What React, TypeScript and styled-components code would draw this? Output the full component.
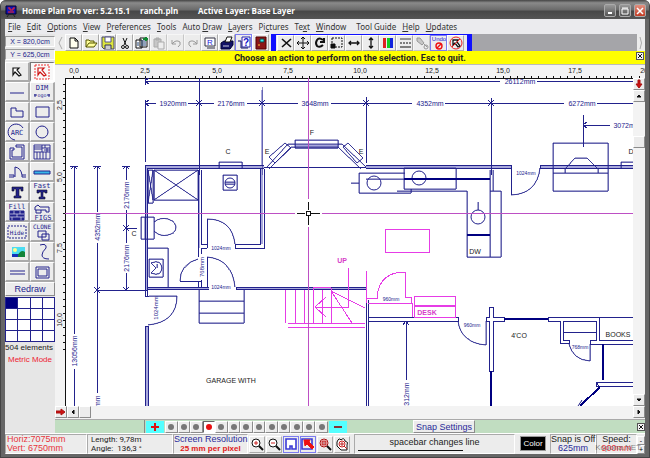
import React from "react";
import styled, { createGlobalStyle, css } from "styled-components";

const navy = "#22228c";
const pink = "#e63ce6";
const face = "#ececec";

const Global = createGlobalStyle`
  * { box-sizing: border-box; }
  body { margin: 0; background: #fff; font-family: "Liberation Sans", Arial, sans-serif; font-size: 9px; }
  button { font: inherit; padding: 0; margin: 0; }
  svg { display: block; }
`;

const raised = css`
  border: 1px solid;
  border-color: #fff #8c8c8c #8c8c8c #fff;
  background: ${face};
`;

const Window = styled.div`
  display: flex;
  flex-direction: column;
  position: relative;
  height: 100vh;
  min-height: 440px;
  padding: 0 4px 3px;
  background: #666;
  border: 1px solid #444;
  border-width: 0 1px 1px;
  border-radius: 6px 6px 0 0;
  overflow: hidden;
`;

const TitleBar = styled.header`
  display: flex;
  flex: none;
  align-items: center;
  height: 19px;
  margin: 0 -4px;
  padding: 2px 5px 0 4px;
  gap: 5px;
  background: linear-gradient(#444, #8a8a8a 15%, #6c6c6c 50%, #484848 60%, #555);
  color: #fff;
  font: 700 8px/12px "Open Sans", sans-serif;
`;
const TitleText = styled.span<{ $w: number }>`
  min-width: ${(p) => p.$w}px;
  white-space: nowrap;
`;
const Spacer = styled.div`
  flex: 1;
`;
const Caption = styled.button<{ $close?: boolean }>`
  display: grid;
  place-items: center;
  width: 12px;
  height: 13px;
  margin-right: -2px;
  border: 1px solid #aaa;
  border-radius: 2px;
  background: ${(p) =>
    p.$close ? "linear-gradient(#e09080, #c43c24)" : "linear-gradient(#999, #555)"};
`;

const MenuBar = styled.nav`
  display: flex;
  flex: none;
  height: 15px;
  align-items: center;
  background: #ebebee;
`;
const MenuItem = styled.button<{ $wide?: boolean }>`
  border: 0;
  padding: 0 ${(p) => (p.$wide ? 7 : 3)}px 0 3px;
  background: transparent;
  color: #333;
  font: 8px/13px "Noto Sans", sans-serif;
  white-space: nowrap;
`;

const Main = styled.div`
  display: flex;
  flex: 1;
  min-height: 0;
  background: #f3f3f3;
`;
const Sidebar = styled.aside`
  display: flex;
  flex-direction: column;
  flex: none;
  width: 50px;
  padding-top: 2px;
  background: #e6e6e6;
`;
const Coord = styled.output`
  height: 11px;
  margin-bottom: 2px;
  border: 1px solid #aaa;
  border-color: #999 #fff #fff #999;
  color: ${navy};
  background: #ececec;
  font: 7px/9px "Liberation Sans", sans-serif;
  text-align: center;
`;
const Tools = styled.div`
  display: grid;
  grid-template-columns: 1fr 1fr;
  grid-auto-rows: 20px;
`;
const Tool = styled.button<{ $on?: boolean }>`
  ${raised}
  display: grid;
  place-items: center;
  border-width: 1px 2px 2px 1px;
  border-color: #fff #aaa #aaa #fff;
  ${(p) => p.$on && "background: #f8f8f8; border-color: #777 #fff #fff #777;"}
`;
const Redraw = styled.button`
  ${raised}
  height: 14px;
  color: ${navy};
  font-size: 9px;
`;
const Layers = styled.div`
  display: grid;
  grid-template: repeat(4, 10px) / repeat(4, 1fr);
  gap: 1px;
  margin-top: 1px;
  padding: 1px;
  background: ${navy};
`;
const Cell = styled.i<{ $on?: boolean }>`
  background: ${(p) => (p.$on ? "#000080" : "#fff")};
`;
const Note = styled.div<{ $red?: boolean }>`
  line-height: 12px;
  text-align: ${(p) => (p.$red ? "center" : "left")};
  color: ${(p) => (p.$red ? "#ee2233" : "#222")};
  font-size: 8px;
  white-space: nowrap;
`;

const Work = styled.main`
  display: flex;
  flex-direction: column;
  flex: 1;
  min-width: 0;
`;
const Toolbar = styled.div`
  display: flex;
  flex: none;
  height: 17px;
  background: #a5a5a9;
`;
const Chevron = styled.div<{ $w: number }>`
  display: grid;
  place-items: center;
  width: ${(p) => p.$w}px;
  background: #ececec;
  color: #aaa;
`;
const Group = styled.div<{ $blue?: boolean }>`
  display: flex;
  padding-right: 2px;
  background: ${face};
  ${(p) => p.$blue && "border: solid #1111ff; border-width: 1px 5px 0; padding: 0 3px 0 1px;"}
`;
const IconButton = styled.button<{ $dim?: boolean; $hot?: boolean }>`
  ${raised}
  display: grid;
  place-items: center;
  width: 17px;
  height: 100%;
  border-color: #fff #aaa #aaa #fff;
  opacity: ${(p) => (p.$dim ? 0.55 : 1)};
  ${(p) => p.$hot && "border-color: #7c7cf0;"}
`;
const Message = styled.div`
  display: flex;
  flex: none;
  align-items: center;
  justify-content: center;
  position: relative;
  height: 14px;
  background: #ffff00;
  border-bottom: 1px solid #bbb;
  color: #222;
  font: bold 9px/12px Roboto, sans-serif;
`;
const CloseBox = styled.button`
  display: grid;
  place-items: center;
  width: 8px;
  height: 8px;
  border: 1px solid #555;
  background: #f4f4f4;
`;
const MessageClose = styled(CloseBox)`
  position: absolute;
  right: 1px;
  top: 1px;
`;
const View = styled.div`
  display: grid;
  flex: 1;
  min-height: 0;
  grid-template: 13px minmax(0, 1fr) 12px / 10px minmax(0, 1fr) 12px;
  background: #f3f3f3;
`;
const TopRuler = styled.svg`
  grid-column: 1 / 4;
  width: 100%;
  height: 13px;
`;
const SideRuler = styled.svg`
  width: 10px;
  height: 100%;
`;
const Plan = styled.svg`
  width: 100%;
  height: 100%;
  background: #fff;
`;
const VScroll = styled.div`
  display: flex;
  flex-direction: column;
`;
const HScroll = styled.div`
  display: flex;
  grid-column: 1 / 4;
`;
const ScrollButton = styled.button`
  ${raised}
  display: grid;
  place-items: center;
  flex: none;
  width: 12px;
  height: 12px;
`;
const Gap = styled.div<{ $h?: number }>`
  flex: ${(p) => (p.$h ? "none" : 1)};
  height: ${(p) => (p.$h ? p.$h + "px" : "auto")};
`;
const LayerBar = styled.div`
  display: flex;
  flex: none;
  height: 14px;
  margin-top: 1px;
  align-items: center;
  background: #c1ddc1;
  border-top: 1px solid #aaa;
`;
const LayerLead = styled.div`
  width: 90px;
  height: 100%;
  border-right: 1px solid #888;
`;
const Step = styled.button`
  display: grid;
  place-items: center;
  width: 18px;
  height: 12px;
  margin: 0 1px;
  border: 0;
  background: #5ff;
`;
const Dots = styled.div`
  display: grid;
  grid-template-columns: repeat(13, 1fr);
  width: 163px;
`;
const Dot = styled.button<{ $on?: boolean }>`
  ${raised}
  display: grid;
  place-items: center;
  height: 12px;
  ${(p) => p.$on && "background: #fff; border-color: #666 #fff #fff #666;"}
  &::after {
    content: "";
    width: 6px;
    height: 6px;
    border-radius: 3px;
    background: ${(p) => (p.$on ? "#e81010" : "#777")};
  }
`;
const SnapButton = styled.button`
  ${raised}
  width: 62px;
  height: 13px;
  margin-left: 65px;
  color: #2a2a9a;
  white-space: nowrap;
`;

const Status = styled.footer`
  display: flex;
  flex: none;
  height: 21px;
  background: ${face};
  border-top: 1px solid #fff;
`;
const Pane = styled.div<{ $w?: number; $pad?: number; $center?: boolean; $small?: boolean }>`
  display: flex;
  flex-direction: column;
  justify-content: center;
  flex: ${(p) => (p.$w ? "none" : "1")};
  width: ${(p) => (p.$w ? p.$w + "px" : "auto")};
  padding-left: ${(p) => p.$pad || 0}px;
  border: 1px solid;
  border-color: #aaa #fff #fff #aaa;
  color: #222;
  text-align: ${(p) => (p.$center ? "center" : "left")};
  font: ${(p) => (p.$small ? "8px/9px Roboto" : '9px/9px "Liberation Sans"')}, sans-serif;
  white-space: nowrap;
`;
const Ink = styled.span<{ $c: string; $bold?: boolean; $size?: number }>`
  color: ${(p) => p.$c};
  font-weight: ${(p) => (p.$bold ? "bold" : "normal")};
  font-size: ${(p) => p.$size || 9}px;
`;
const ZoomGroup = styled.div`
  display: flex;
  align-items: center;
  gap: 1px;
  padding: 0 4px 0 1px;
`;
const ZoomButton = styled(IconButton)`
  width: 16px;
  height: 17px;
`;
const LineSample = styled.div`
  width: 105px;
  height: 1px;
  margin: 3px 0 0 3px;
  background: #111;
`;
const ColorButton = styled.button`
  width: 26px;
  height: 15px;
  margin: 2px 4px 0 5px;
  border: 1px solid #999;
  background: #000;
  color: #fff;
  font-size: 8px;
`;
const SpeedPane = styled.div`
  display: flex;
  flex: none;
  width: 49px;
`;
const Spin = styled.button`
  ${raised}
  flex: 1;
  width: 8px;
  font-size: 7px;
  line-height: 6px;
`;
const SpinCol = styled.div`
  display: flex;
  flex-direction: column;
  padding-top: 2px;
`;
const Watermark = styled.div`
  position: absolute;
  right: 8px;
  bottom: 5px;
  color: rgba(70, 70, 70, 0.65);
  font: 8px/9px "Liberation Sans", sans-serif;
`;

type Art = { name: string; art: React.ReactNode; dim?: boolean; hot?: boolean };

const Svg = ({ w = 14, h = 14, children }: { w?: number; h?: number; children: React.ReactNode }) => (
  <svg width={w} height={h} viewBox={`0 0 ${w} ${h}`} fill="none" stroke="#111" aria-hidden="true">
    {children}
  </svg>
);

const fileIcons: Art[] = [
  { name: "New", art: <path d="M3 2H8L11 5V12H3ZM8 2V5H11" fill="#ffe" /> },
  {
    name: "Open",
    art: <path d="M2 11V4H5L6 5H10V7M2 11L5 7H13L10 11Z" fill="#ff9" stroke="#550" />,
  },
  {
    name: "Save",
    art: (
      <>
        <path d="M1 1H13V13H3L1 11Z" fill="#dde63c" stroke="#446" />
        <path d="M4 1H10V6H4Z" fill="#fff" stroke="#558" />
        <path d="M4 13V9H10V13" fill="#ccc" stroke="#335" />
      </>
    ),
  },
  {
    name: "Cut",
    art: (
      <>
        <path d="M5 2L8 9M9 2L6 9" />
        <circle cx="5" cy="11" r="1.5" />
        <circle cx="9" cy="11" r="1.5" />
      </>
    ),
  },
  {
    name: "Copy",
    art: (
      <>
        <path d="M1 4H7V12H1ZM5 2H12V11H5Z" fill="#fff" />
        <path d="M6 5H11M6 7H11M6 9H11M2 7H4M2 9H4" stroke="#247" />
        <path d="M8 3H13M11 1V5" stroke="#183" strokeWidth="2" />
      </>
    ),
  },
  {
    name: "Paste",
    dim: true,
    art: (
      <>
        <path d="M2 3H9V11H2ZM4 2H7V4H4Z" fill="#aaa" stroke="#777" />
        <path d="M6 6H12V13H6Z" fill="#eee" stroke="#777" />
      </>
    ),
  },
  { name: "Undo", dim: true, art: <path d="M3 4V8H7M3 8Q7 3 11 6Q12 9 9 11" stroke="#555" /> },
  { name: "Redo", dim: true, art: <path d="M11 4V8H7M11 8Q7 3 3 6Q2 9 5 11" stroke="#555" /> },
  {
    name: "Resolution",
    art: (
      <>
        <path d="M2 2H12V10H2ZM4 12H12" fill="#fff" stroke="#334" />
        <text x="4" y="9" fontSize="8" fill="#22d" stroke="none">R</text>
      </>
    ),
  },
  {
    name: "Print",
    art: (
      <>
        <path d="M1 7L4 5H13V9L10 13H1Z" fill="#116" stroke="#003" />
        <path d="M5 6L7 1H12L10 6Z" fill="#fff" />
        <path d="M3 10H9" stroke="#ccd" />
      </>
    ),
  },
  {
    name: "Help",
    hot: true,
    art: (
      <>
        <path d="M5 1H13V11H5Z" fill="#fff" stroke="#22a" />
        <path d="M1 5H4V12H11" stroke="#116" />
        <text x="6" y="10" fontSize="10" fontWeight="bold" fill="#11c" stroke="none">?</text>
      </>
    ),
  },
  {
    name: "Exit",
    art: (
      <>
        <path d="M2 1H12V13H2Z" fill="#8c1717" stroke="#500" />
        <path d="M6 3H10V6H6Z" fill="#3ee" stroke="#144" />
        <path d="M4 9H6" stroke="#fc4" />
      </>
    ),
  },
];

const editIcons: Art[] = [
  { name: "Delete", art: <path d="M3 3L12 11M12 3L3 11" strokeWidth="1.6" /> },
  {
    name: "Move",
    art: <path d="M7 1V13M1 7H13M5 3L7 1L9 3M5 11L7 13L9 11M3 5L1 7L3 9M11 5L13 7L11 9" />,
  },
  { name: "Rotate", art: <path d="M10 4Q6 1 4 4Q2 7 4 10Q7 12 10 9M11 2V6H7" strokeWidth="2" /> },
  {
    name: "Scale",
    art: (
      <>
        <path d="M2 2H12V11H2Z" strokeDasharray="2 1" />
        <path d="M1 8H5V12H1Z" fill="#111" />
      </>
    ),
  },
  { name: "Flip horizontally", art: <path d="M2 7H12M4 5L2 7L4 9M10 5L12 7L10 9" strokeWidth="1.3" /> },
  { name: "Flip vertically", art: <path d="M7 2V12M5 4L7 2L9 4M5 10L7 12L9 10" strokeWidth="1.3" /> },
  {
    name: "Colour",
    art: (
      <g stroke="none">
        <path d="M2 2H5V12H2Z" fill="#d22" />
        <path d="M6 2H9V12H6Z" fill="#1c2" />
        <path d="M9 2H12V12H9Z" fill="#12d" />
      </g>
    ),
  },
  {
    name: "Line style",
    art: (
      <>
        <path d="M2 3H13" strokeWidth="0.8" />
        <path d="M2 7H13" strokeDasharray="2 1" />
        <path d="M2 11H13" />
      </>
    ),
  },
  {
    name: "Pipette",
    dim: true,
    art: (
      <>
        <path d="M2 2H5L9 7L7 9L2 5ZM9 8L12 11" fill="#aaa" stroke="#555" />
        <circle cx="11" cy="11" r="2" stroke="#555" />
      </>
    ),
  },
  {
    name: "Undo action",
    hot: true,
    art: (
      <>
        <text x="7" y="5" fontSize="6" textAnchor="middle" fill="#22c" stroke="none">Undo</text>
        <circle cx="7" cy="10" r="3" stroke="#e11" strokeWidth="1.4" />
        <path d="M9 8L5 12" stroke="#e11" strokeWidth="1.4" />
      </>
    ),
  },
  {
    name: "Cancel selection",
    art: (
      <>
        <path d="M4 4H9L8 6L11 10L9 11L6 7L4 9Z" fill="#fff" strokeWidth="1.3" />
        <circle cx="7" cy="7" r="6" stroke="#e22" />
        <path d="M11 3L3 11" stroke="#e22" />
      </>
    ),
  },
];

const Word = ({ x, y, s, children }: { x: number; y: number; s: number; children: string }) => (
  <text
    x={x}
    y={y}
    fontSize={s}
    fill={navy}
    stroke="none"
    textAnchor="middle"
    fontFamily='"DejaVu Sans Mono", monospace'
  >
    {children}
  </text>
);

const bigT = "M5 4H16V8H14V6H12V13H14V15H7V13H9V6H7V8H5Z";

const tools: Art[] = [
  { name: "Select", art: <path d="M6 5H12L10 7L14 12L12 13L8 9L6 12Z" fill="#fff" strokeWidth="1.2" /> },
  {
    name: "Select area",
    art: (
      <>
        <path d="M3 2H17V16H3Z" stroke="#e33" strokeDasharray="2 1" />
        <path d="M6 5H12L10 7L14 12L12 13L8 9L6 12Z" fill="#fff" stroke="#c11" strokeWidth="1.2" />
      </>
    ),
  },
  { name: "Line", art: <path d="M3 10H17" stroke={navy} /> },
  {
    name: "Dimension",
    art: (
      <>
        <Word x={10} y={7} s={7}>DIM</Word>
        <path d="M2 12H5M15 12H18M3 11V14M17 11V14" stroke={navy} />
        <Word x={10} y={14} s={5}>ogo</Word>
      </>
    ),
  },
  { name: "Polygon", art: <path d="M4 5H9V8H16V14H4Z" stroke={navy} /> },
  { name: "Rectangle", art: <path d="M4 4H17V14H4Z" stroke={navy} /> },
  {
    name: "Arc",
    art: (
      <>
        <path d="M16 5A8 8 0 1 0 8 17" stroke={navy} />
        <Word x={10} y={12} s={7}>ARC</Word>
      </>
    ),
  },
  { name: "Circle", art: <circle cx="10" cy="9" r="6" stroke={navy} /> },
  { name: "Walls", art: <path d="M3 5H7V7H5V14H15V4H9V2H17V16H3Z" stroke={navy} /> },
  {
    name: "Fill patterns",
    art: (
      <path
        d="M2 2H18V16H2ZM2 9H18M10 2V9M2 4H10M2 6H10M10 5H18M13 2V5M15 5V9M5 9V16M8 9V16M11 9V16M14 9V16M12 7H18"
        stroke={navy}
        strokeWidth="0.9"
      />
    ),
  },
  { name: "Door", art: <path d="M2 12H7V14H2M8 14V4Q14 5 15 12V14H19M15 12H19" stroke={navy} /> },
  { name: "Window", art: <path d="M2 8H18V11H2Z" fill="#37b7e8" stroke={navy} /> },
  { name: "Text", art: <path d={bigT} fill={navy} stroke="#112" strokeWidth="0.6" /> },
  {
    name: "Fast text",
    art: (
      <>
        <Word x={10} y={5} s={7}>Fast</Word>
        <path d="M5 7H15V10H13V9H11V14H13V16H7V14H9V9H7V10H5Z" fill={navy} stroke="#112" strokeWidth="0.6" />
      </>
    ),
  },
  {
    name: "Fill",
    art: (
      <>
        <Word x={10} y={6} s={7}>Fill</Word>
        <path d="M3 8H17V17H3Z" fill={navy} stroke={navy} />
        <path d="M3 11H17M3 14H17M7 8V11M13 8V11M10 11V14M5 14V17M14 14V17" stroke="#dde" strokeWidth="0.7" />
      </>
    ),
  },
  {
    name: "Figures",
    art: (
      <>
        <path d="M3 4L6 2L8 4H17V9H14V7H9V10H4V7H3ZM4 7H9" stroke={navy} />
        <Word x={11} y={17} s={7}>FIGS</Word>
      </>
    ),
  },
  {
    name: "Hide",
    art: (
      <>
        <path d="M1 3H19V15H1Z" stroke={navy} strokeDasharray="2 1" />
        <Word x={10} y={12} s={6}>Hide</Word>
      </>
    ),
  },
  {
    name: "Clone",
    art: (
      <>
        <Word x={10} y={6} s={6}>CLONE</Word>
        <path d="M6 8H14V14H6ZM10 11H17V17H10Z" stroke={navy} />
      </>
    ),
  },
  {
    name: "Picture",
    art: (
      <g stroke="none">
        <path d="M5 4H18V14H5Z" fill="#4bdcf2" />
        <path d="M5 11H18V14H5Z" fill="#1630b8" />
        <path d="M11 12Q14 6 18 9V14H11Z" fill="#12843a" />
        <circle cx="8" cy="7" r="2" fill="#ffff8c" />
      </g>
    ),
  },
  { name: "Curve", art: <path d="M8 2Q15 0 14 5Q10 9 10 12Q10 16 17 16" stroke={navy} /> },
  { name: "Double line", art: <path d="M3 8H18M3 11H18" stroke={navy} /> },
  { name: "Double box", art: <path d="M4 4H17V15H4ZM6 6H15V13H6Z" stroke={navy} /> },
];

const Lens = ({ c = "#111" }: { c?: string }) => (
  <>
    <circle cx="6" cy="6" r="4" stroke={c} fill="#fff" />
    <path d="M9 9L13 13" strokeWidth="2" />
  </>
);
const zooms: Art[] = [
  { name: "Zoom in", art: <><Lens /><path d="M4 6H8M6 4V8" stroke="#c22" /></> },
  { name: "Zoom out", art: <><Lens /><path d="M4 6H8" stroke="#c22" /></> },
  {
    name: "Zoom page",
    hot: true,
    art: <path d="M2 2H12V12H8V9H6V12H2Z" fill="#fff" stroke="#3b3bd6" strokeWidth="1.6" />,
  },
  {
    name: "Zoom selection",
    hot: true,
    art: (
      <>
        <path d="M1 2H11V12H1Z" stroke="#3b3bd6" strokeWidth="1.6" />
        <path d="M3 3H9L8 5L13 10L11 12L6 7L4 9Z" fill="#e11" stroke="#e11" />
      </>
    ),
  },
  { name: "Zoom window", art: <><Lens c="#a11" /><path d="M4 4H8V8H4Z" stroke="#c22" fill="#c88" /></> },
  {
    name: "Zoom drag",
    art: (
      <>
        <path d="M2 5Q4 0 6 3Q9 0 10 4Q14 5 12 8V13H6L2 9Z" fill="#fff" />
        <circle cx="7" cy="7" r="3" stroke="#c22" />
        <path d="M5 7H9M7 5V9M9 9L12 12" stroke="#b22" />
      </>
    ),
  },
];

const menus: [string, string, string][] = [
  ["", "F", "ile"],
  ["", "E", "dit"],
  ["", "O", "ptions"],
  ["", "V", "iew"],
  ["", "P", "references"],
  ["", "T", "ools"],
  ["Auto ", "D", "raw"],
  ["", "L", "ayers"],
  ["Pi", "c", "tures"],
  ["Te", "x", "t"],
  ["", "W", "indow"],
  ["Tool Guide", "", ""],
  ["", "H", "elp"],
  ["", "U", "pdates"],
];

const topLabels: [number, string][] = [
  [74, "0,0"], [145, "2,5"], [217, "5,0"], [288, "7,5"], [360, "10,0"],
  [432, "12,5"], [503, "15,0"], [575, "17,5"], [647, "20,0"],
];
const sideLabels: [number, string][] = [[105, "2,5"], [177, "5,0"], [248, "7,5"], [320, "10,0"]];
const ticks = (from: number, count: number) =>
  Array.from({ length: count }, (_, i) => Math.round(from + i * 7.16));

const Label = ({
  x, y, s = 7, c = navy, turn, bold, children,
}: {
  x: number; y: number; s?: number; c?: string; turn?: boolean; bold?: boolean; children: string;
}) => (
  <text
    x={x}
    y={y}
    fontSize={s}
    fill={c}
    stroke="none"
    fontWeight={bold ? "bold" : "normal"}
    textAnchor="middle"
    dominantBaseline="central"
    transform={turn ? `rotate(-90 ${x} ${y})` : undefined}
  >
    {children}
  </text>
);

const Star = ({ x, y }: { x: number; y: number }) => (
  <path d={`M${x - 3} ${y - 3}L${x + 3} ${y + 3}M${x + 3} ${y - 3}L${x - 3} ${y + 3}`} />
);

const dimLines = [
  "M145 81H500M537 81H634M145 77V85M149 78L145 81L149 84",
  "M145 103H156M188 103H214M247 103H298M331 103H412M445 103H564M597 103H640",
  "M149 100L145 103L149 106M145 100V162M199 78V175M366 97V163M491 98V175",
  "M583 115V147M583 125H610M587 122L583 125L587 128",
  "M74 166V334M74 369V410M97 166V212M97 243V393M126 166V180M126 210V243M126 273V290",
  "M70 166H78M93 166H101M122 166H130M71 169L74 166L77 169M94 169L97 166L100 169M123 169L126 166L129 169",
  "M97 290H148M126 228H137M123 287L126 290L129 287M406 321V380M403 325L406 321L409 325M402 321H410",
];

const walls = [
  "M145 288V165H264M147 168H264M147 168V296M145 288V296M145 296H149",
  "M264 167H366M366 165H511M366 168H511M511 165V195M540 165H634M540 168H634M540 165V168",
  "M145 406V326H148V406",
  "M147 287H209M147 289H209M236 287H366M236 289H366M236 287V289",
  "M198 170V257M201 170V244M201 244H207M201 248H207M201 248V254M201 280V288M207 219V248",
  "M235 244H260V169M235 248H264V169M235 244V248M207 257V288M198 281V287M180 281H201",
  "M366 300V406M368 300V406M368 317H458V321H368M368 303V317",
  "M489 307H493V317H504V321H493V371H489V321H486V317H489Z",
  "M634 317H548V321H560V343H569V340H563V321H596V340H590V344H634M599 317V340H634M563 332H596",
  "M634 382H596V386H634M596 382L600 388",
];

const fixtures = [
  "M219 169V162H242V169M621 169V162H634",
  "M267 167L288 144H342L366 167M269 169L291 147H338L361 169",
  "M269 157L285 143L291 148L275 163ZM348 143L343 147L357 163L363 158ZM295 140H338V148H295Z",
  "M148 170H153V203H148ZM148 170L153 200M153 170L148 203M154 170H198V200H154ZM154 170L198 200M198 170L154 200",
  "M141 217H154V239H141ZM145 217V239M154 222Q160 217 168 219Q176 222 176 227Q176 233 168 235Q160 237 154 231",
  "M148 248H168V287M149 259H163V277H149ZM151 263Q161 259 162 268Q161 277 151 273M151 263L156 268L151 273M157 264V268",
  "M223 175H237V190H223ZM225 182H235M225 184H235",
  "M207 219Q232 219 235 244M207 257Q232 259 235 287M180 281Q180 264 198 259",
  "M149 296H177Q177 322 148 325",
  "M199 290V323M244 290V323M199 301H244M199 313H244M199 323H244",
  "M405 173H359V193H411V189M351 183H359M404 168H456V189H404ZM366 179H404",
  "M397 191H467V257H501V191H490M490 170V257M493 170V191M478 202V210",
  "M511 195Q537 194 540 168M553 143H608V191H553ZM553 173H608M565 173V169L575 158H587L598 169V173",
  "M458 321Q461 343 486 345V321M569 344Q573 360 590 361V344M578 406L582 400",
];

const magenta = [
  "M385 229H429V252H385Z",
  "M348 268V307H315M326 297L315 307L326 317",
  "M285 290V323M295 290V323M304 290V323M313 288V323M322 290V323M331 288V323M313 287H331",
  "M331 291L365 308M331 291L352 323M288 323H365M288 327H365",
  "M366 271V298H377V296Q380 272 405 272V297H411M368 303H412V317M411 297V303M366 298V303",
  "M414 296H455V317H414ZM414 306H455",
];

const FloorPlan = () => (
  <Plan role="img" aria-label="Floor plan">
    <g transform="translate(-65 -78)" fill="none" shapeRendering="crispEdges">
      <path d="M65 78V2000M65 78H2000" stroke="#111" strokeWidth="2" />
      <g stroke="#a9a9dc" strokeWidth="2">
        <path d="M145 167H264M366 167H511M540 167H634M147 168V290M147 327V406M199 170V248M262 90V244M147 288H209M236 288H366M295 146H338" />
      </g>
      <g stroke={navy}>
        <path d={dimLines.join("")} />
        <path d={walls.join("")} />
        <path d={fixtures.join("")} shapeRendering="auto" strokeWidth="0.8" />
        <path d={fixtures.join("")} strokeWidth="0.5" />
        <path d="M262 87V175" strokeWidth="0.5" />
        <circle cx="230" cy="183" r="5" shapeRendering="auto" />
        <circle cx="374" cy="183" r="7" shapeRendering="auto" />
        <circle cx="419" cy="178" r="7" shapeRendering="auto" />
        <circle cx="478" cy="217" r="7" shapeRendering="auto" />
        {[199, 262, 366, 491].map((x) => <Star key={x} x={x} y={103} />)}
        <Star x={97} y={290} />
        <Star x={126} y={228} />
        <path
          d="M404 179H490M467 235H490M504 319H548M491 371V406M603 344V380M600 387L580 406"
          stroke="#000080"
          strokeWidth="2"
        />
      </g>
      <g stroke={pink}>
        <path d={magenta.join("")} />
        <path d="M414 306H455" strokeWidth="2" />
        <path d="M308 78V199M308 227V1000M65 213H295M322 213H2000" stroke="#bd4fc4" />
      </g>
      <path d="M297 213H305M311 213H320M308 202V210M308 216V225M306 211H310V215H306Z" stroke="#111" />

      <Label x={520} y={81}>26112mm</Label>
      <Label x={173} y={103}>1920mm</Label>
      <Label x={231} y={103}>2176mm</Label>
      <Label x={315} y={103}>3648mm</Label>
      <Label x={430} y={103}>4352mm</Label>
      <Label x={582} y={103}>6272mm</Label>
      <Label x={627} y={125}>3072mm</Label>
      <Label x={74} y={351} turn>13056mm</Label>
      <Label x={97} y={227} turn>4352mm</Label>
      <Label x={97} y={409} turn>4352mm</Label>
      <Label x={126} y={195} turn>2176mm</Label>
      <Label x={126} y={258} turn>2176mm</Label>
      <Label x={406} y={394} turn>312mm</Label>
      <Label x={156} y={308} s={6} turn>1024mm</Label>
      <Label x={202} y={267} s={6} turn>768mm</Label>
      <Label x={221} y={248} s={5}>1024mm</Label>
      <Label x={221} y={287} s={5}>1024mm</Label>
      <Label x={526} y={173} s={5}>1024mm</Label>
      <Label x={391} y={299} s={5}>960mm</Label>
      <Label x={472} y={325} s={5}>960mm</Label>
      <Label x={580} y={347} s={5}>768mm</Label>
      <Label x={228} y={151} c="#222">C</Label>
      <Label x={134} y={233} c="#222">C</Label>
      <Label x={267} y={151} c="#222">E</Label>
      <Label x={361} y={151} c="#222">E</Label>
      <Label x={312} y={132} c="#222">F</Label>
      <Label x={631} y={151} c="#222">D</Label>
      <Label x={475} y={251} c="#222">DW</Label>
      <Label x={519} y={335} c="#222">4'CO</Label>
      <Label x={618} y={334} c="#222">BOOKS</Label>
      <Label x={231} y={380} c="#222">GARAGE WITH</Label>
      <Label x={342} y={260} c="#d63cc8" bold>UP</Label>
      <Label x={427} y={312} c="#d63cc8" bold>DESK</Label>
    </g>
  </Plan>
);

const Buttons = ({ items }: { items: Art[] }) => (
  <>
    {items.map((i) => (
      <IconButton key={i.name} aria-label={i.name} $dim={i.dim} $hot={i.hot}>
        <Svg>{i.art}</Svg>
      </IconButton>
    ))}
  </>
);

const Cross = () => (
  <Svg w={6} h={6}><path d="M1 1L5 5M5 1L1 5" /></Svg>
);

export default function App() {
  return (
    <>
      <Global />
      <Window>
        <TitleBar>
          <Svg w={12} h={12}>
            <path d="M1 1H11V9H1Z" fill="#1414b4" stroke="#003" />
            <path d="M3 3H5V5H8V3H10M3 7H9" stroke="#f22" />
            <path d="M2 12L4 9H8L10 12" stroke="#222" />
          </Svg>
          <TitleText $w={113}>Home Plan Pro ver: 5.2.15.1</TitleText>
          <TitleText $w={53}>ranch.pln</TitleText>
          <TitleText $w={100}>Active Layer: Base Layer</TitleText>
          <Spacer />
          <Caption aria-label="Minimize"><Svg w={8} h={8}><path d="M2 6H6" stroke="#fff" strokeWidth="2" /></Svg></Caption>
          <Caption aria-label="Maximize"><Svg w={8} h={8}><path d="M1 2H7V7H1ZM1 1H7" stroke="#fff" /></Svg></Caption>
          <Caption aria-label="Close" $close><Svg w={8} h={8}><path d="M1 1L7 7M7 1L1 7" stroke="#fff" strokeWidth="1.5" /></Svg></Caption>
        </TitleBar>
        <MenuBar>
          {menus.map(([a, u, b]) => (
            <MenuItem key={a + u + b} $wide={u === "W"}>{a}<u>{u}</u>{b}</MenuItem>
          ))}
        </MenuBar>
        <Main>
          <Sidebar>
            <Coord>X = 820,0cm</Coord>
            <Coord>Y = 625,0cm</Coord>
            <Tools>
              {tools.map((t) => (
                <Tool key={t.name} aria-label={t.name} $on={t.name === "Select area"}>
                  <Svg w={20} h={18}>{t.art}</Svg>
                </Tool>
              ))}
            </Tools>
            <Redraw>Redraw</Redraw>
            <Layers>
              {Array.from({ length: 16 }, (_, i) => <Cell key={i} $on={i === 0} />)}
            </Layers>
            <Note>504 elements</Note>
            <Note $red>Metric Mode</Note>
          </Sidebar>
          <Work>
            <Toolbar>
              <Chevron $w={10}><Svg w={6} h={14}><path d="M5 1L2 7L5 13" stroke="#aaa" /></Svg></Chevron>
              <Group><Buttons items={fileIcons} /></Group>
              <Group $blue><Buttons items={editIcons} /></Group>
              <Spacer />
              <Chevron $w={8}><Svg w={6} h={14}><path d="M2 1Q5 7 2 13" stroke="#aaa" /></Svg></Chevron>
            </Toolbar>
            <Message>
              Choose an action to perform on the selection. Esc to quit.
              <MessageClose aria-label="Close message"><Cross /></MessageClose>
            </Message>
            <View>
              <TopRuler>
                <g transform="translate(-55 -65)" shapeRendering="crispEdges">
                  <path d={ticks(73, 81).map((x) => `M${x} 76V78`).join("")} stroke="#111" />
                  {topLabels.map(([x, t]) => <Label key={t} x={x} y={70} s={7} c="#222">{t}</Label>)}
                </g>
              </TopRuler>
              <SideRuler>
                <g transform="translate(-55 -78)" shapeRendering="crispEdges">
                  <path d={ticks(84, 38).map((y) => `M63 ${y}H65`).join("")} stroke="#111" />
                  {sideLabels.map(([y, t]) => <Label key={t} x={59} y={y} s={7} c="#222" turn>{t}</Label>)}
                </g>
              </SideRuler>
              <FloorPlan />
              <VScroll>
                <ScrollButton aria-label="Jump down"><Svg w={10} h={10}><path d="M4 1H6V5H8L5 9L2 5H4Z" fill="#c11" stroke="#a11" /></Svg></ScrollButton>
                <ScrollButton aria-label="Scroll up"><Svg w={8} h={8}><path d="M2 5L4 3L6 5Z" fill="#111" /></Svg></ScrollButton>
                <Gap $h={34} />
                <ScrollButton aria-label="Vertical position" />
                <Gap />
                <ScrollButton aria-label="Scroll down"><Svg w={8} h={8}><path d="M2 3L4 5L6 3Z" fill="#111" /></Svg></ScrollButton>
              </VScroll>
              <HScroll>
                <ScrollButton aria-label="Jump right"><Svg w={10} h={10}><path d="M0 4H5V2L9 5L5 8V6H0Z" fill="#c11" stroke="#a11" /></Svg></ScrollButton>
                <ScrollButton aria-label="Scroll left"><Svg w={8} h={8}><path d="M5 2L3 4L5 6Z" fill="#111" /></Svg></ScrollButton>
                <ScrollButton aria-label="Horizontal position" />
                <Gap />
                <ScrollButton aria-label="Scroll right"><Svg w={8} h={8}><path d="M3 2L5 4L3 6Z" fill="#111" /></Svg></ScrollButton>
              </HScroll>
            </View>
            <LayerBar>
              <LayerLead />
              <Step aria-label="Add layer"><Svg w={8} h={8}><path d="M0 4H8M4 0V8" stroke="#d11" strokeWidth="2" /></Svg></Step>
              <Dots>
                {Array.from({ length: 13 }, (_, i) => <Dot key={i} aria-label={`Layer ${i + 1}`} $on={i === 3} />)}
              </Dots>
              <Step aria-label="Remove layer"><Svg w={8} h={8}><path d="M0 4H8" stroke="#833" strokeWidth="2" /></Svg></Step>
              <SnapButton>Snap Settings</SnapButton>
              <Spacer />
              <CloseBox aria-label="Close layer bar"><Cross /></CloseBox>
            </LayerBar>
          </Work>
        </Main>
        <Status>
          <Pane $w={82} $pad={1}>
            <Ink $c="#e8343c">Horiz:7075mm</Ink>
            <Ink $c="#e8343c">Vert: 6750mm</Ink>
          </Pane>
          <Pane $w={86} $pad={3} $small>
            <span>Length: 9,78m</span>
            <span>Angle:&nbsp; 136,3 °</span>
          </Pane>
          <Pane $w={75} $center>
            <Ink $c="#2a2a9a">Screen Resolution</Ink>
            <Ink $c="#e02020" $bold $size={8}>25 mm per pixel</Ink>
          </Pane>
          <ZoomGroup>
            {zooms.map((z) => (
              <ZoomButton key={z.name} aria-label={z.name} $hot={z.hot}><Svg>{z.art}</Svg></ZoomButton>
            ))}
          </ZoomGroup>
          <Pane $center>
            <span>spacebar changes line</span>
            <LineSample />
          </Pane>
          <ColorButton>Color</ColorButton>
          <Pane $w={46} $center>
            <span>Snap is Off</span>
            <Ink $c="#2a2a9a">625mm</Ink>
          </Pane>
          <SpeedPane>
            <Pane $center>
              <span>Speed:</span>
              <Ink $c="#e8343c">900mm</Ink>
            </Pane>
            <SpinCol>
              <Spin aria-label="Slower">-</Spin>
              <Spin aria-label="Faster">+</Spin>
            </SpinCol>
          </SpeedPane>
        </Status>
        <Watermark>Kopona.NET</Watermark>
      </Window>
    </>
  );
}
